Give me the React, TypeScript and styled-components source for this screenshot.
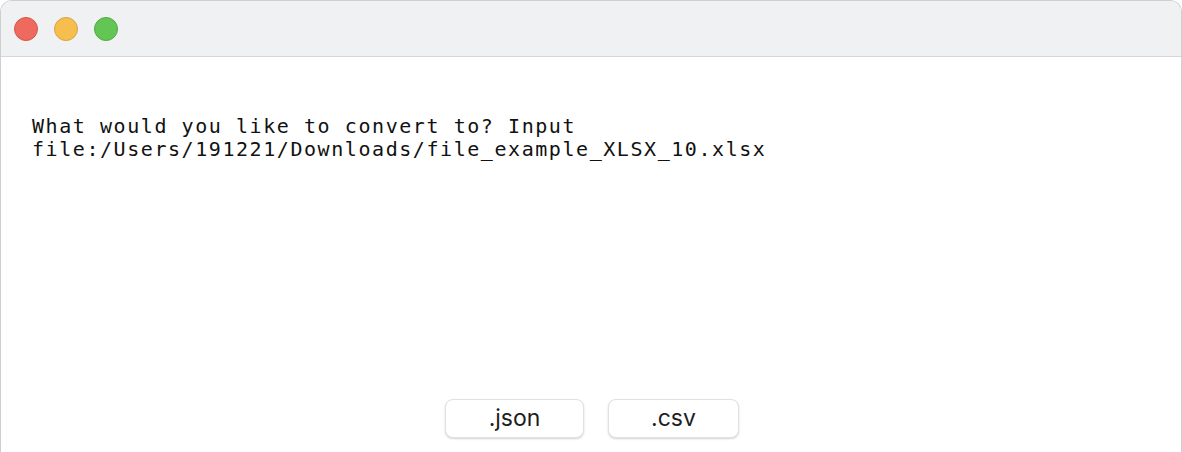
import React from "react";
import styled, { createGlobalStyle } from "styled-components";

const Global = createGlobalStyle`
  html, body { margin: 0; padding: 0; background: #ffffff; overflow: hidden; }
  * { box-sizing: border-box; }
`;

const Window = styled.div`
  width: 1182px;
  height: 452px;
  display: flex;
  flex-direction: column;
  background: #ffffff;
  border: 1px solid #cfcfcf;
  border-bottom: none;
  border-radius: 12px 12px 0 0;
  overflow: hidden;
`;

const TitleBar = styled.div`
  height: 56px;
  flex: none;
  display: flex;
  align-items: center;
  gap: 16px;
  padding: 0 0 0 13px;
  background: #f0f1f2;
  border-bottom: 1px solid #d6d6d6;
`;

const Light = styled.span<{ $fill: string; $edge: string }>`
  width: 24px;
  height: 24px;
  border-radius: 50%;
  background: ${(p) => p.$fill};
  border: 1px solid ${(p) => p.$edge};
`;

const Content = styled.div`
  flex: 1;
  display: flex;
  flex-direction: column;
  padding: 58px 31px 14px;
`;

const Message = styled.div`
  font-family: "DejaVu Sans Mono", "Liberation Mono", monospace;
  font-size: 20px;
  line-height: 23px;
  letter-spacing: 1.56px;
  color: #111111;
  white-space: pre;
`;

const Actions = styled.div`
  margin-top: auto;
  display: flex;
  justify-content: center;
  gap: 24px;
  padding-left: 2px;
`;

const Button = styled.button<{ $w: number }>`
  width: ${(p) => p.$w}px;
  height: 39px;
  border: 1px solid #e2e2e2;
  border-radius: 8px;
  background: #ffffff;
  box-shadow: 0 1px 2px rgba(0, 0, 0, 0.18);
  font-family: Inter, "Liberation Sans", sans-serif;
  font-size: 23px;
  color: #1e1e1e;
  padding: 0 0 2px;
  cursor: pointer;
`;

export default function App() {
  return (
    <>
      <Global />
      <Window>
        <TitleBar>
          <Light $fill="#ee6a5f" $edge="#d6564c" />
          <Light $fill="#f5be4f" $edge="#d9a443" />
          <Light $fill="#62c554" $edge="#52aa44" />
        </TitleBar>
        <Content>
          <Message>
            {"What would you like to convert to? Input\nfile:/Users/191221/Downloads/file_example_XLSX_10.xlsx"}
          </Message>
          <Actions>
            <Button $w={139}>.json</Button>
            <Button $w={131}>.csv</Button>
          </Actions>
        </Content>
      </Window>
    </>
  );
}
